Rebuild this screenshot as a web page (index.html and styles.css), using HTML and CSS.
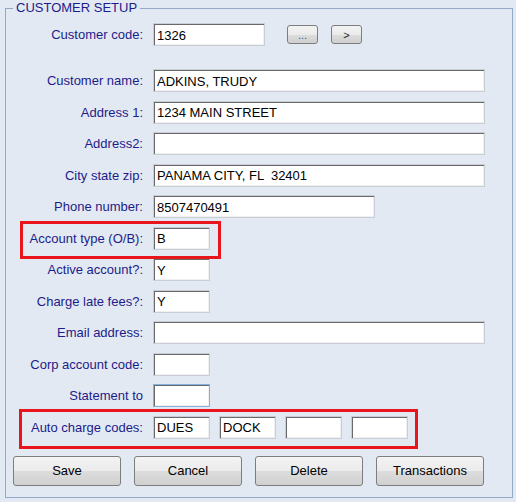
FILE: index.html
```html
<html>
<head>
  <title>Customer Setup</title>
  <link rel="stylesheet" href="styles.css">
</head>
<body>
  <fieldset class="setup">
    <legend>CUSTOMER SETUP</legend>

    <div class="row first">
      <label>Customer code:</label>
      <input class="code" type="text" value="1326">
      <button class="mini lookup">...</button>
      <button class="mini next">&gt;</button>
    </div>

    <div class="row name">
      <label>Customer name:</label>
      <input class="wide" type="text" value="ADKINS, TRUDY">
    </div>
    <div class="row">
      <label>Address 1:</label>
      <input class="wide" type="text" value="1234 MAIN STREET">
    </div>
    <div class="row">
      <label>Address2:</label>
      <input class="wide" type="text" value="">
    </div>
    <div class="row">
      <label>City state zip:</label>
      <input class="wide" type="text" value="PANAMA CITY, FL  32401">
    </div>
    <div class="row">
      <label>Phone number:</label>
      <input class="phone" type="text" value="8507470491">
    </div>
    <div class="row flagged">
      <label>Account type (O/B):</label>
      <input class="short" type="text" value="B">
    </div>
    <div class="row">
      <label>Active account?:</label>
      <input class="short" type="text" value="Y">
    </div>
    <div class="row">
      <label>Charge late fees?:</label>
      <input class="short" type="text" value="Y">
    </div>
    <div class="row">
      <label>Email address:</label>
      <input class="wide" type="text" value="">
    </div>
    <div class="row">
      <label>Corp account code:</label>
      <input class="short" type="text" value="">
    </div>
    <div class="row">
      <label>Statement to</label>
      <input class="short focused" type="text" value="">
    </div>
    <div class="row flagged codes">
      <label>Auto charge codes:</label>
      <input class="short" type="text" value="DUES">
      <input class="short" type="text" value="DOCK">
      <input class="short" type="text" value="">
      <input class="short" type="text" value="">
    </div>

    <div class="actions">
      <button class="btn">Save</button>
      <button class="btn">Cancel</button>
      <button class="btn">Delete</button>
      <button class="btn">Transactions</button>
    </div>
  </fieldset>
</body>
</html>
```

FILE: styles.css
```css
body {
  margin: 0;
  background-color: #e3e9f2;
  font-family: "Liberation Sans", Arial, sans-serif;
  font-size: 13px;
}

.setup {
  margin: 0 3px 0 5px;
  padding: 0 0 11px 0;
  border: 1px solid #93a9c7;
}

.setup legend {
  margin-left: 7px;
  padding: 0 3px;
  line-height: 16px;
  color: #1c1c8a;
}

.row {
  display: flex;
  align-items: center;
  height: 23px;
  margin-top: 8.5px;
}

.row.first {
  margin-top: 7px;
}

.row.name {
  margin-top: 23px;
}

.row label {
  width: 137px;
  margin-right: 10px;
  text-align: right;
  color: #1c1c8a;
}

.row input {
  box-sizing: border-box;
  height: 23px;
  padding: 1px 3px 0 3px;
  border: 1px solid #c9ced6;
  box-shadow: inset 1px 1px 0 #696969, inset -1px -1px 0 #f0f0f0;
  background: white;
  font: inherit;
  color: black;
  outline: none;
}

.row input.code { width: 112px; }
.row input.wide { width: 332px; }
.row input.phone { width: 222px; }
.row input.short { width: 57px; }

.row input.focused {
  border-color: #84b2de;
}

.codes input {
  margin-right: 9px;
}

.flagged {
  position: relative;
  width: fit-content;
}

.flagged::after {
  content: "";
  position: absolute;
  top: -6px;
  bottom: -9px;
  left: 14px;
  right: -11px;
  border: 3px solid #e8151d;
}

.codes.flagged::after {
  top: -7px;
  bottom: -10px;
  left: 13px;
  right: -1px;
}

.mini {
  box-sizing: border-box;
  width: 31px;
  height: 19px;
  padding: 0;
  border: 1px solid #7d7d7d;
  border-radius: 3px;
  background: linear-gradient(#f3f3f3, #ebebeb 50%, #dddddd 50%, #d0d0d0);
  font-family: "Liberation Sans", Arial, sans-serif;
  font-size: 11px;
  color: #222;
}

.mini.lookup {
  margin-left: 22px;
  color: #2a5ca8;
}

.mini.next {
  margin-left: 13px;
}

.actions {
  display: flex;
  gap: 13px;
  margin-top: 17px;
  padding-left: 7px;
}

.btn {
  box-sizing: border-box;
  width: 108px;
  height: 30px;
  padding: 0;
  border: 1px solid #7d7d7d;
  border-radius: 3px;
  background: linear-gradient(#f3f3f3, #ebebeb 50%, #dddddd 50%, #d0d0d0);
  font-family: "Liberation Sans", Arial, sans-serif;
  font-size: 13px;
  color: black;
}
```
